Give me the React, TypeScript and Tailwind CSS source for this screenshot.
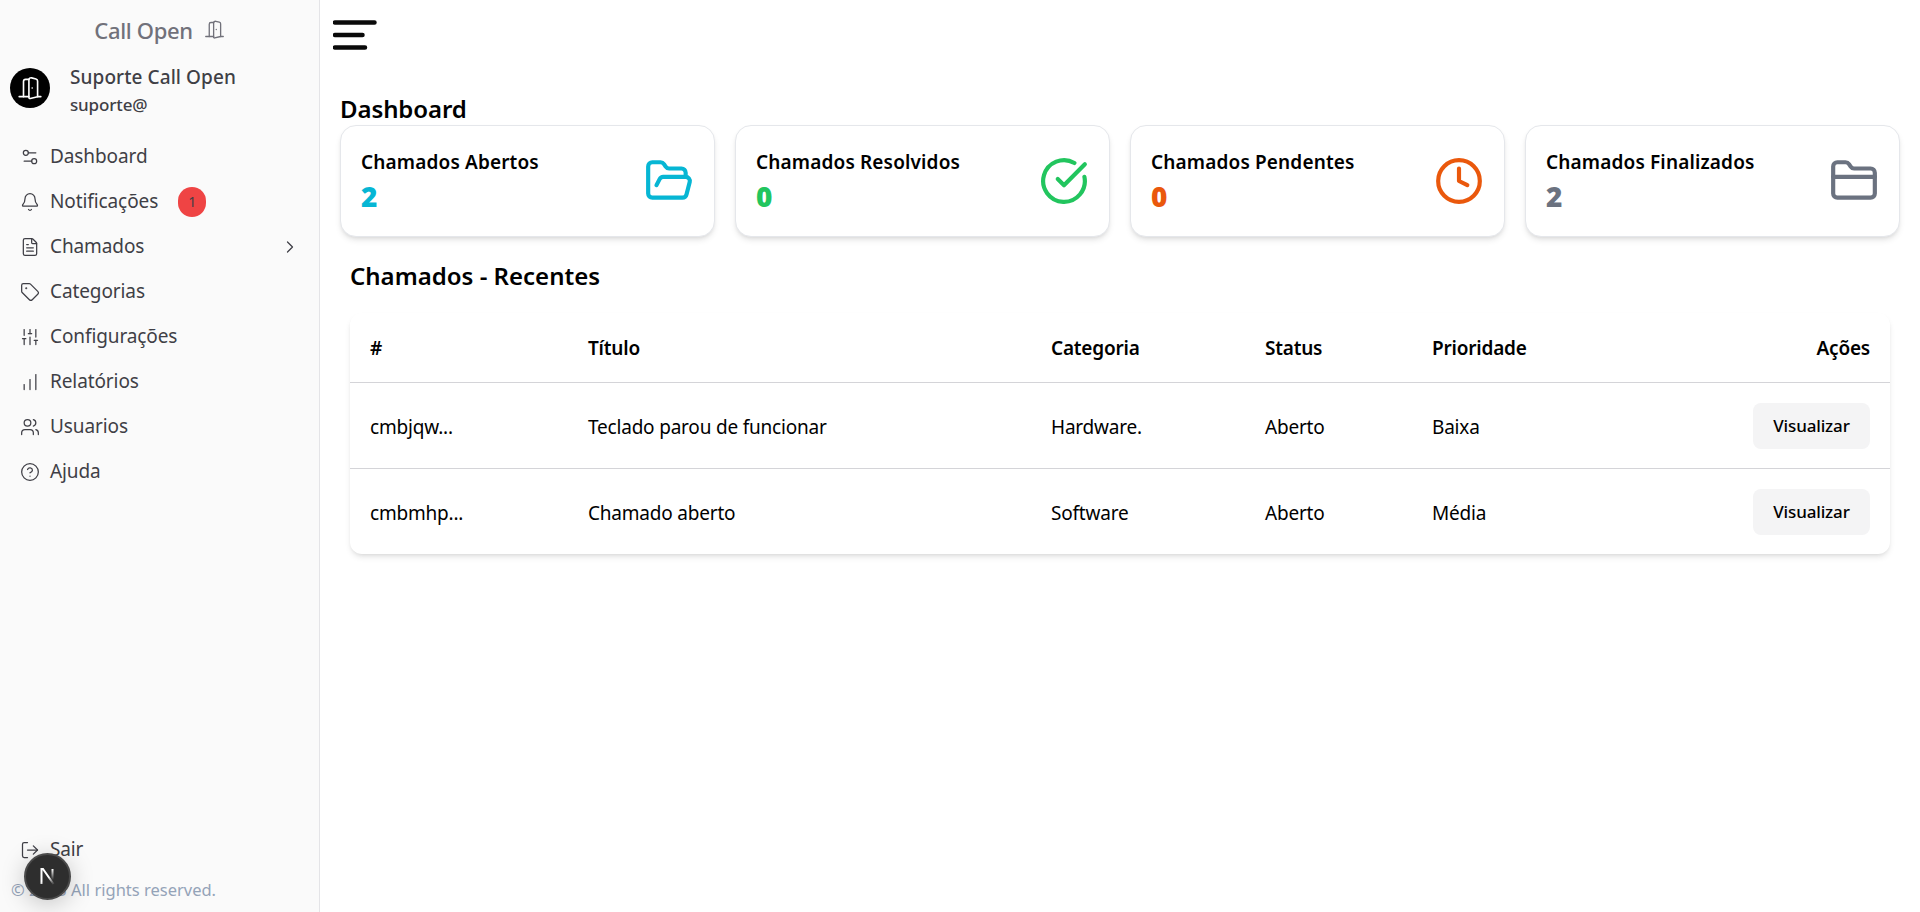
import { Settings2, Bell, FileText, Tag, SlidersVertical, ChartNoAxesColumnIncreasing, Users, CircleHelp, LogOut, ChevronRight, DoorOpen, FolderOpen, CircleCheckBig, Clock, FolderClosed } from "lucide-react";

const nav = [
  { label: "Dashboard", Icon: Settings2 },
  { label: "Notificações", Icon: Bell, badge: "1" },
  { label: "Chamados", Icon: FileText, chevron: true },
  { label: "Categorias", Icon: Tag },
  { label: "Configurações", Icon: SlidersVertical },
  { label: "Relatórios", Icon: ChartNoAxesColumnIncreasing },
  { label: "Usuarios", Icon: Users },
  { label: "Ajuda", Icon: CircleHelp },
];

const cards = [
  { title: "Chamados Abertos", value: "2", color: "text-[#06b6d4]", Icon: FolderOpen },
  { title: "Chamados Resolvidos", value: "0", color: "text-[#22c55e]", Icon: CircleCheckBig },
  { title: "Chamados Pendentes", value: "0", color: "text-[#ea580c]", Icon: Clock },
  { title: "Chamados Finalizados", value: "2", color: "text-[#6b7280]", Icon: FolderClosed },
];

const rows = [
  ["cmbjqw...", "Teclado parou de funcionar", "Hardware.", "Aberto", "Baixa"],
  ["cmbmhp...", "Chamado aberto", "Software", "Aberto", "Média"],
];

export default function App() {
  return (
    <div className="flex h-screen bg-white text-black overflow-hidden font-['Noto_Sans',sans-serif]">
      <aside className="relative flex w-[320px] shrink-0 flex-col border-r border-[#e4e4e7] bg-[#fafafa]">
        <div className="flex h-[60px] items-center justify-center gap-[11px] text-[#71717a]">
          <span className="text-[22px] font-medium tracking-[-0.35px]">Call Open</span>
          <DoorOpen size={21} strokeWidth={1.5} className="-mt-[1px]" />
        </div>
        <div className="flex items-center gap-5 pl-[10px] h-[50px] mt-[3px]">
          <div className="flex h-10 w-10 items-center justify-center rounded-full bg-black text-white">
            <DoorOpen size={26} strokeWidth={1.5} />
          </div>
          <div className="pt-[4px] text-[#3f3f46]">
            <div className="text-[19px] leading-[28px] font-medium tracking-[0.08px]">Suporte Call Open</div>
            <div className="mt-[1px] text-[17px] leading-[26px] font-medium tracking-[-0.15px]">suporte@</div>
          </div>
        </div>
        <nav className="mt-[21px] flex flex-col">
          {nav.map(({ label, Icon, badge, chevron }) => (
            <div key={label} className="flex h-[45px] items-center pl-[20px] pr-[19px] text-[#3f3f46]">
              <Icon size={20} strokeWidth={1.5} />
              <span className="ml-[10px] text-[19px] tracking-[-0.1px]">{label}</span>
              {badge && (
                <span className="ml-[20px] flex h-[30px] w-[28px] items-center justify-center rounded-full bg-[#ef4444] text-[14px] text-[#3f3f46]">
                  {badge}
                </span>
              )}
              {chevron && <ChevronRight size={20} strokeWidth={1.5} className="ml-auto" />}
            </div>
          ))}
        </nav>
        <div className="mt-auto flex flex-col">
          <div className="flex h-[45px] items-center pl-[20px] text-[#3f3f46]">
            <LogOut size={20} strokeWidth={1.5} />
            <span className="ml-[10px] text-[19px] tracking-[-0.2px]">Sair</span>
          </div>
          <div className="flex h-[40px] items-start pl-[11px] pt-[6px] text-[16.5px] leading-[24px] text-[#94a3b8]">
            © 2025 All rights reserved.
          </div>
        </div>
        <div className="absolute left-[24px] top-[853px] flex h-[47px] w-[47px] items-center justify-center rounded-full border-2 border-[#4a4a4a] bg-[#2e2e2e] shadow-[0_4px_24px_rgba(0,0,0,0.22)]">
          <svg width="17" height="17" viewBox="0 0 17 17" fill="none">
            <defs>
              <linearGradient id="nfade" x1="4" y1="2" x2="13" y2="16" gradientUnits="userSpaceOnUse">
                <stop offset="0.55" stopColor="#fff" />
                <stop offset="1" stopColor="#fff" stopOpacity="0.15" />
              </linearGradient>
              <linearGradient id="nfade2" x1="13" y1="1" x2="13" y2="12" gradientUnits="userSpaceOnUse">
                <stop offset="0" stopColor="#fff" />
                <stop offset="1" stopColor="#fff" stopOpacity="0" />
              </linearGradient>
            </defs>
            <path d="M2.5 16V1H4L14.5 16" stroke="url(#nfade)" strokeWidth="2" />
            <path d="M13.5 1V12" stroke="url(#nfade2)" strokeWidth="2" />
          </svg>
        </div>
      </aside>
      <main className="flex min-w-0 flex-1 flex-col px-5">
        <div className="flex h-[92px] items-start pt-[20px]">
          <svg width="44" height="32" viewBox="0 0 44 32" fill="none" className="-ml-[7px]">
            <path d="M2 2.5H41.5M2 15H29.5M2 27.5H32" stroke="#0a0a0a" strokeWidth="4.5" strokeLinecap="round" />
          </svg>
        </div>
        <h1 className="text-2xl leading-8 h-[33px] pt-[1px] font-semibold tracking-[-0.1px]">Dashboard</h1>
        <div className="grid grid-cols-4 gap-5">
          {cards.map(({ title, value, color, Icon }) => (
            <div key={title} className="flex h-[112px] items-center justify-between rounded-2xl border border-[#e5e7eb] bg-white pl-5 pr-[20px] shadow-md">
              <div className="-mt-[2px]">
                <div className="text-[19px] leading-[28px] font-semibold tracking-[0.15px]">{title}</div>
                <div className={`mt-[3px] text-[28px] leading-[34px] font-black ${color}`}>{value}</div>
              </div>
              <Icon size={50} strokeWidth={2} className={color} />
            </div>
          ))}
        </div>
        <h2 className="mt-[23px] px-[10px] text-2xl leading-8 font-semibold">Chamados - Recentes</h2>
        <div className="mx-[10px] mt-[21px] overflow-hidden rounded-xl bg-white shadow-md">
          <table className="w-full table-fixed border-collapse text-left text-[19px]">
            <colgroup>
              <col className="w-[218px]" />
              <col className="w-[463px]" />
              <col className="w-[214px]" />
              <col className="w-[167px]" />
              <col />
              <col className="w-[200px]" />
            </colgroup>
            <thead>
              <tr className="h-[69px] border-b border-[#d4d4d8]">
                {["#", "Título", "Categoria", "Status", "Prioridade"].map((h) => (
                  <th key={h} className="pl-[20px] pt-[2px] font-semibold tracking-[-0.2px]">{h}</th>
                ))}
                <th className="pr-5 pt-[2px] text-right font-semibold tracking-[-0.2px]">Ações</th>
              </tr>
            </thead>
            <tbody>
              {rows.map((r, i) => (
                <tr key={r[0]} className={`h-[86px] ${i === 0 ? "border-b border-[#d4d4d8]" : ""}`}>
                  {r.map((c) => (
                    <td key={c} className="pl-[20px] pt-[4px] tracking-[-0.2px]">{c}</td>
                  ))}
                  <td className="pr-5 pt-[1px] text-right">
                    <button className="h-[46px] w-[117px] rounded-lg bg-[#f4f4f5] text-[17px] font-medium tracking-[-0.15px]">Visualizar</button>
                  </td>
                </tr>
              ))}
            </tbody>
          </table>
        </div>
      </main>
    </div>
  );
}
